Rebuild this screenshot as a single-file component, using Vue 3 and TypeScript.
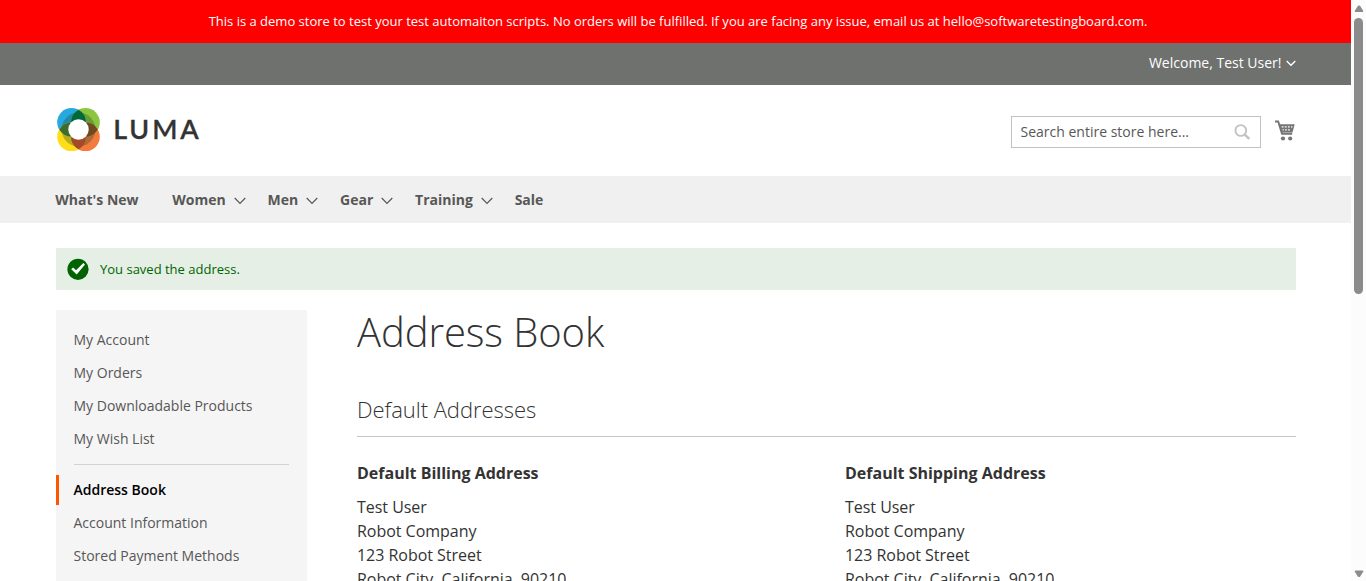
<script setup lang="ts">
interface NavItem {
  label: string
  menu: boolean
}

const nav: NavItem[] = [
  { label: "What's New", menu: false },
  { label: 'Women', menu: true },
  { label: 'Men', menu: true },
  { label: 'Gear', menu: true },
  { label: 'Training', menu: true },
  { label: 'Sale', menu: false },
]

const accountLinks: string[] = ['My Account', 'My Orders', 'My Downloadable Products', 'My Wish List']
const settingLinks: string[] = ['Address Book', 'Account Information', 'Stored Payment Methods']
const current = 'Address Book'

const addressLines: string[] = ['Test User', 'Robot Company', '123 Robot Street', 'Robot City, California, 90210']
const addresses: string[] = ['Default Billing Address', 'Default Shipping Address']
</script>

<template>
  <div class="window">
    <div class="page">
      <div class="notice">This is a demo store to test your test automaiton scripts. No orders will be fulfilled. If you are facing any issue, email us at hello@softwaretestingboard.com.</div>
      <div class="panel">
        <span>Welcome, Test User!</span>
        <svg class="panel-arrow" width="10" height="7" viewBox="0 0 10 7"><path d="M.7 1 5 5.2 9.300 1" fill="none" stroke="#fff" stroke-width="1.4" /></svg>
      </div>

      <header class="header">
        <svg class="logo" width="148" height="44" viewBox="0 0 148 44">
          <g transform="translate(.5 -.2)">
            <circle cx="15" cy="14.500" r="14.300" fill="#26a9e0" />
            <circle cx="29" cy="14.500" r="14.300" fill="#8bc63e" />
            <circle cx="15" cy="29" r="14.300" fill="#ffde17" />
            <circle cx="29" cy="29" r="14.300" fill="#f47b3c" />
            <circle cx="22" cy="21.700" r="17" fill="#1b4a30" fill-opacity=".32" />
            <path d="M22 2A14.300 14.300 0 0 1 22 27A14.300 14.300 0 0 1 22 2" fill="#00693a" />
            <path d="M22 16.500A14.300 14.300 0 0 1 22 41.500A14.300 14.300 0 0 1 22 16.500" fill="#a34a26" />
            <path d="M2.700 21.700A14.300 14.300 0 0 1 27.300 21.700A14.300 14.300 0 0 1 2.700 21.700" fill="#3f6b2c" />
            <path d="M16.700 21.700A14.300 14.300 0 0 1 41.300 21.700A14.300 14.300 0 0 1 16.700 21.700" fill="#6d4a1f" />
            <circle cx="22" cy="21.700" r="10.200" fill="#fff" />
          </g>
          <text x="57.200" y="30.500" textLength="88.500" lengthAdjust="spacingAndGlyphs">LUMA</text>
        </svg>
        <div class="tools">
          <div class="search">
            <span>Search entire store here...</span>
            <svg width="16" height="16" viewBox="0 0 16 16" fill="none" stroke="#c2c2c2"><circle cx="6.800" cy="6.500" r="5.400" stroke-width="1.900" /><path d="m10.600 10.400 4.600 4.600" stroke-width="2.400" /></svg>
          </div>
          <svg class="cart" width="20" height="22" viewBox="0 0 20 22">
            <path d="M0 1.500h3.200l3.800 12.200h10.200" fill="none" stroke="#757575" stroke-width="1.900" />
            <path d="M4 4.200h15.700l-2.200 8.300H6.500z" fill="#757575" />
            <path d="M6.700 6.800h1.800m1.300 0h1.800m1.300 0h1.800m1.300 0h1.400M7.600 9.800h1.200m1.300 0h1.700m1.300 0h1.700" stroke="#fff" stroke-width="1.200" />
            <circle cx="8" cy="18.500" r="2.100" fill="#757575" /><circle cx="15.200" cy="18.500" r="2.100" fill="#757575" />
          </svg>
        </div>
      </header>

      <nav class="nav">
        <a v-for="item in nav" :key="item.label" class="nav-item">
          {{ item.label }}
          <svg v-if="item.menu" width="12" height="8" viewBox="0 0 12 8"><path d="m.7 1 5.300 5.300L11.300 1" fill="none" stroke="#575757" stroke-width="1.200" /></svg>
        </a>
      </nav>

      <main class="main">
        <div class="message">
          <svg width="22" height="22" viewBox="0 0 22 22"><circle cx="11" cy="11.300" r="10.600" fill="#006400" /><path d="m4.200 11.300 1.900-1.700 3 2.700 7.200-7.200 1.700 1.300-8.300 10.200z" fill="#fff" /></svg>
          <span>You saved the address.</span>
        </div>
        <div class="columns">
          <aside class="sidebar">
            <a v-for="link in accountLinks" :key="link" class="link">{{ link }}</a>
            <div class="divider"></div>
            <a v-for="link in settingLinks" :key="link" class="link" :class="{ current: link === current }">{{ link }}</a>
          </aside>
          <section class="content">
            <h1>Address Book</h1>
            <h2>Default Addresses</h2>
            <div class="addresses">
              <div v-for="title in addresses" :key="title">
                <h3>{{ title }}</h3>
                <address><span v-for="line in addressLines" :key="line">{{ line }}</span></address>
              </div>
            </div>
          </section>
        </div>
      </main>
    </div>
    <div class="scrollbar">
      <svg width="10" height="8" viewBox="0 0 10 8"><path d="M4 .8Q5 0 6 .8L9.300 6Q9.300 7 8.400 7H1.600Q.7 7 .7 6z" fill="#8b8b8b" /></svg>
      <div class="thumb"></div>
      <svg class="down" width="10" height="8" viewBox="0 0 10 8"><path d="M4 6.700Q5 7.500 6 6.700L9.300 1.500Q9.300.5 8.400.5H1.600Q.7.5.7 1.500z" fill="#8b8b8b" /></svg>
    </div>
  </div>
</template>

<style>
html,
body {
  margin: 0;
  overflow: hidden;
}
</style>

<style scoped>
.window {
  display: flex;
  height: 581px;
  overflow: hidden;
  background: #fff;
  color: #333;
  font-family: 'Open Sans', sans-serif;
  font-size: 14px;
}
.page {
  width: 1351px;
  height: 581px;
  overflow: hidden;
}
.notice {
  box-sizing: border-box;
  height: 43px;
  padding-left: 5px;
  line-height: 42px;
  background: #f00;
  color: #fff;
  text-align: center;
  font-size: 13px;
  white-space: nowrap;
}
.panel {
  display: flex;
  box-sizing: border-box;
  height: 42px;
  padding: 0 55px 3px 0;
  align-items: center;
  justify-content: flex-end;
  gap: 4.500px;
  background: #6e716e;
  color: #fff;
}
.panel-arrow {
  margin-top: 2px;
}
.header {
  display: flex;
  box-sizing: border-box;
  height: 91px;
  padding: 23px 56px 0;
  align-items: flex-start;
  justify-content: space-between;
}
.logo text {
  fill: #333;
  font: 600 26px Lato, sans-serif;
  letter-spacing: 2.800px;
  stroke: #333;
  stroke-width: .3px;
}
.tools {
  display: flex;
  padding-top: 8px;
  gap: 14px;
}
.search {
  display: flex;
  box-sizing: border-box;
  width: 250px;
  height: 32px;
  padding: 0 10px 0 8.500px;
  align-items: center;
  justify-content: space-between;
  border: 1px solid #c2c2c2;
  color: #575757;
}
.search span {
  padding-bottom: 2px;
}
.cart {
  margin-top: 4px;
}
.nav {
  display: flex;
  box-sizing: border-box;
  height: 47px;
  padding-left: 55.300px;
  align-items: center;
  background: #f0f0f0;
}
.nav-item {
  display: flex;
  margin-right: 22px;
  align-items: center;
  gap: 7.800px;
  color: #575757;
  font-weight: 700;
}
.nav-item:first-child {
  margin-right: 33.800px;
}
.nav-item svg {
  margin-top: 2px;
}
.main {
  width: 1240px;
  margin: 25px 0 0 56px;
}
.message {
  display: flex;
  height: 42px;
  padding-left: 11px;
  align-items: center;
  gap: 11px;
  background: #e5efe5;
  color: #006400;
  font-size: 13px;
}
.columns {
  display: flex;
  margin-top: 20px;
  gap: 50px;
}
.sidebar {
  box-sizing: border-box;
  width: 251px;
  height: 300px;
  flex: none;
  padding-top: 15px;
  background: #f5f5f5;
}
.link {
  display: block;
  box-sizing: border-box;
  height: 30px;
  margin-bottom: 3px;
  padding-left: 14.500px;
  border-left: 3px solid transparent;
  line-height: 30px;
  color: #575757;
}
.link.current {
  border-color: #ff5501;
  color: #000;
  font-weight: 600;
}
.divider {
  height: 1px;
  margin: 10px 18px;
  background: #d1d1d1;
}
.content {
  width: 939px;
}
h1,
h2,
h3 {
  margin: 0;
}
h1 {
  height: 84px;
  font-size: 40px;
  line-height: 44px;
  font-weight: 300;
  letter-spacing: -.08px;
}
h2 {
  box-sizing: border-box;
  height: 43px;
  border-bottom: 1px solid #c6c6c6;
  font-size: 22px;
  line-height: 30px;
  font-weight: 300;
  letter-spacing: -.03px;
}
.addresses {
  display: grid;
  padding-top: 25px;
  grid-template-columns: 488px 1fr;
  font-size: 16px;
}
h3 {
  margin-bottom: 11px;
  font-size: 16px;
  line-height: 22px;
  font-weight: 700;
}
address {
  font-style: normal;
  letter-spacing: -.03px;
}
address span {
  display: block;
  line-height: 24px;
}
.scrollbar {
  display: flex;
  box-sizing: border-box;
  width: 15px;
  height: 581px;
  padding: 5px 0 3px;
  flex-direction: column;
  align-items: center;
  background: #fcfcfc;
}
.thumb {
  width: 9px;
  height: 276px;
  margin-top: 5px;
  border-radius: 5px;
  background: #8b8b8b;
}
.down {
  margin-top: auto;
}
</style>
